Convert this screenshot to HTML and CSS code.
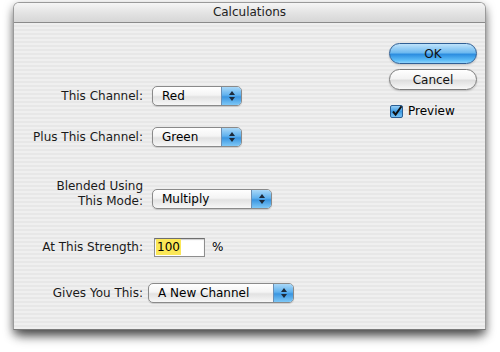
FILE: index.html
```html
<!DOCTYPE html>
<html lang="en">
  <head>
    <meta charset="UTF-8" />
    <title>Calculations</title>
    <link rel="stylesheet" href="styles.css">
  </head>
  <body>
    <div class="window">
      <div class="titlebar">Calculations</div>

      <div class="content">
        <!-- form rows -->
        <div class="form">
          <div class="row row-1">
            <div class="label">This Channel:</div>
            <div class="select w-short"><span>Red</span><i class="arrows"></i></div>
          </div>
          <div class="row row-2">
            <div class="label">Plus This Channel:</div>
            <div class="select w-short"><span>Green</span><i class="arrows"></i></div>
          </div>
          <div class="row row-3">
            <div class="label">Blended Using<br />This Mode:</div>
            <div class="select w-mid"><span>Multiply</span><i class="arrows"></i></div>
          </div>
          <div class="row row-4">
            <div class="label">At This Strength:</div>
            <div class="strength">
              <div class="field"><span class="sel">100</span></div>
              <span class="unit">%</span>
            </div>
          </div>
          <div class="row row-5">
            <div class="label">Gives You This:</div>
            <div class="select w-long"><span>A New Channel</span><i class="arrows"></i></div>
          </div>
        </div>

        <!-- buttons -->
        <div class="actions">
          <button class="btn btn-ok">OK</button>
          <button class="btn">Cancel</button>
          <label class="check">
            <svg width="13" height="13" viewBox="0 0 13 13">
              <defs>
                <linearGradient id="cb" x1="0" y1="0" x2="0" y2="1">
                  <stop offset="0" stop-color="#9fd3f7" />
                  <stop offset="0.5" stop-color="#3d9ae2" />
                  <stop offset="1" stop-color="#7cc6f6" />
                </linearGradient>
              </defs>
              <rect x="0.5" y="0.5" width="12" height="12" rx="1.5" fill="url(#cb)" stroke="#2b5e93" />
              <path d="M3 6.5 L5.6 9.6 L11.5 1.2" fill="none" stroke="#111" stroke-width="2" />
            </svg>
            Preview
          </label>
        </div>
      </div>
    </div>
  </body>
</html>
```

FILE: styles.css
```css
html,
body {
  height: 100%;
}

body {
  margin: 0;
  background: white;
  font-family: "DejaVu Sans", "Noto Sans", sans-serif;
  font-size: 12px;
  color: #000;
  padding-top: 2px;
  box-sizing: border-box;
}

.window {
  margin: 0 14px 0 13px;
  height: 328px;
  border-radius: 6px 6px 0 0;
  border: 1px solid #9a9a9a;
  border-bottom-color: #7a7a7a;
  box-sizing: border-box;
  background: repeating-linear-gradient(
    to bottom,
    #efefef 0,
    #efefef 2px,
    #e7e7e7 2px,
    #e7e7e7 4px
  );
  box-shadow: 0 4px 10px rgba(0, 0, 0, 0.5), 0 10px 12px -4px rgba(0, 0, 0, 0.45);
  display: flex;
  flex-direction: column;
}

.titlebar {
  height: 19px;
  line-height: 19px;
  text-align: center;
  color: #222;
  border-radius: 5px 5px 0 0;
  background: linear-gradient(#f6f6f6, #e4e4e4 50%, #d6d6d6);
  border-bottom: 1px solid #8a8a8a;
}

.content {
  flex: 1;
  display: flex;
}

.form {
  flex: 1;
  padding-top: 63px;
}

.row {
  display: grid;
  grid-template-columns: 129px auto;
  column-gap: 9px;
  align-items: center;
  height: 20px;
}

.row-2 {
  margin-top: 21px;
}

.row-3 {
  margin-top: 32px;
  height: 30px;
  align-items: end;
}

.row-4 {
  margin-top: 28px;
}

.row-5 {
  margin-top: 26px;
}

.row-5 .select {
  margin-left: -4px;
}

.label {
  text-align: right;
  white-space: nowrap;
  color: #1a1a1a;
}

.row-3 .label {
  line-height: 15px;
}

.select {
  height: 20px;
  box-sizing: border-box;
  border: 1px solid #8a8a8a;
  border-radius: 5px;
  background: linear-gradient(#ffffff, #f4f4f4 45%, #e2e2e2 55%, #f7f7f7);
  display: flex;
  align-items: center;
  justify-content: space-between;
  padding-left: 9px;
  box-shadow: 0 1px 1px rgba(0, 0, 0, 0.15);
  overflow: hidden;
}

.w-short {
  width: 90px;
}

.w-mid {
  width: 120px;
}

.w-long {
  width: 146px;
}

.arrows {
  align-self: stretch;
  width: 19px;
  background: linear-gradient(#a9d8f8, #5fb1ee 45%, #3a95e0 55%, #7ec8f7);
  border-left: 1px solid #6a8fb5;
  position: relative;
}

.arrows::before,
.arrows::after {
  content: "";
  position: absolute;
  left: 7px;
  border-left: 3px solid transparent;
  border-right: 3px solid transparent;
}

.arrows::before {
  top: 4px;
  border-bottom: 4px solid #1d2a3a;
}

.arrows::after {
  bottom: 4px;
  border-top: 4px solid #1d2a3a;
}

.strength {
  display: flex;
  align-items: center;
  gap: 7px;
}

.field {
  width: 51px;
  height: 19px;
  box-sizing: border-box;
  margin-left: 2px;
  background: white;
  border: 1px solid #8e8e8e;
  border-top-color: #6e6e6e;
  box-shadow: inset 0 1px 1px rgba(0, 0, 0, 0.2);
  display: flex;
  align-items: center;
  padding-left: 1px;
}

.sel {
  background: #fbe757;
  padding: 1px;
}

.actions {
  width: 88px;
  margin-right: 8px;
  padding-top: 20px;
  display: flex;
  flex-direction: column;
}

.btn {
  font: inherit;
  height: 21px;
  border-radius: 11px;
  border: 1px solid #7d7d7d;
  background: linear-gradient(#ffffff, #f3f3f3 45%, #dedede 55%, #f8f8f8);
  color: #111;
  padding: 0;
  box-shadow: 0 1px 2px rgba(0, 0, 0, 0.2);
}

.btn + .btn {
  margin-top: 5px;
}

.btn-ok {
  border-color: #2f5f95;
  background: linear-gradient(#bfe3fb, #6fbaf0 45%, #2d8ee0 55%, #5cbcf7 85%, #8fd3fb);
}

.check {
  display: flex;
  align-items: center;
  gap: 5px;
  margin-top: 14px;
  margin-left: 1px;
}

.check svg {
  display: block;
}
```
